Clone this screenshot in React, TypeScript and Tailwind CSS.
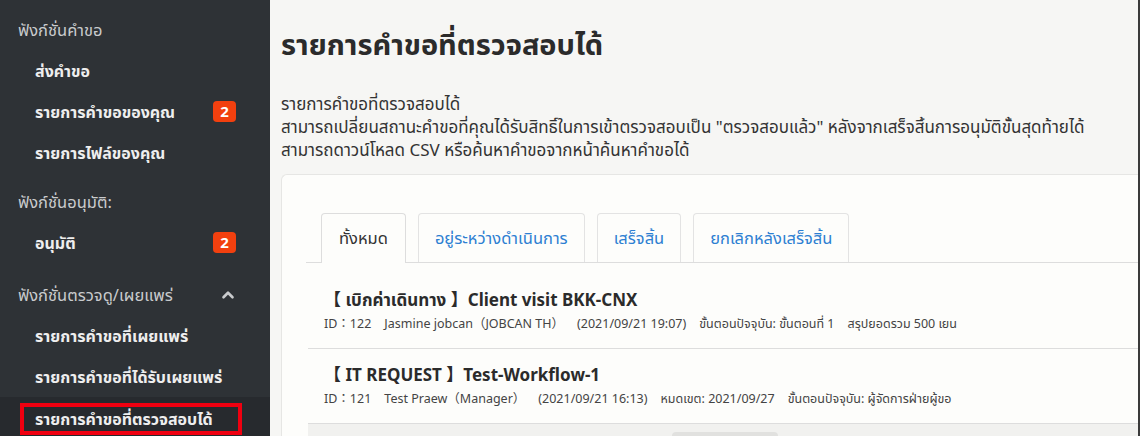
import React from 'react'
import { ChevronUp } from 'lucide-react'

const font = { fontFamily: '"Noto Sans", "Noto Sans Thai", "Noto Sans CJK JP", sans-serif' }

const Badge = ({ n }: { n: number }) => (
  <span className="ml-auto mr-[34px] flex h-[21px] w-[23px] items-center justify-center rounded-[4px] bg-[#f2400f] text-[15px] font-bold leading-none text-white">
    {n}
  </span>
)

const SideHeader = ({ children, chevron }: { children: React.ReactNode; chevron?: boolean }) => (
  <div className="flex h-[40px] items-center pl-[18px] text-[16.5px] text-[#c9cbcd]">
    {children}
    {chevron && <ChevronUp className="ml-auto mr-[33px] h-[18px] w-[18px] text-[#c9cbcd]" strokeWidth={3.5} />}
  </div>
)

const SideItem = ({ label, badge }: { label: string; badge?: number }) => (
  <div className="flex h-[41px] items-center pl-[35px] text-[16px] font-bold text-[#eeeeee]">
    {label}
    {badge !== undefined && <Badge n={badge} />}
  </div>
)

const Sidebar = () => (
  <aside className="w-[270px] shrink-0 bg-[#2e3236] pt-[10px]">
    <SideHeader>ฟังก์ชั่นคำขอ</SideHeader>
    <SideItem label="ส่งคำขอ" />
    <SideItem label="รายการคำขอของคุณ" badge={2} />
    <SideItem label="รายการไฟล์ของคุณ" />
    <div className="mt-[9px]">
      <SideHeader>ฟังก์ชั่นอนุมัติ:</SideHeader>
    </div>
    <SideItem label="อนุมัติ" badge={2} />
    <div className="mt-[12px]">
      <SideHeader chevron>ฟังก์ชั่นตรวจดู/เผยแพร่</SideHeader>
    </div>
    <SideItem label="รายการคำขอที่เผยแพร่" />
    <SideItem label="รายการคำขอที่ได้รับเผยแพร่" />
    <div className="flex h-[42px] items-start bg-[#272a2e] pt-[6px]">
      <div className="ml-[20px] flex h-[32px] w-[222px] items-center border-[4px] border-[#f00010] pl-[11px] text-[16px] font-bold text-[#eeeeee]">
        รายการคำขอที่ตรวจสอบได้
      </div>
    </div>
  </aside>
)

const tabs = ['ทั้งหมด', 'อยู่ระหว่างดำเนินการ', 'เสร็จสิ้น', 'ยกเลิกหลังเสร็จสิ้น']

const Tabs = () => (
  <div className="flex gap-[12px] border-b border-[#dddddd] pl-[15px]">
    {tabs.map((t, i) => (
      <div
        key={t}
        className={
          i === 0
            ? '-mb-px flex h-[50px] items-center rounded-t-[4px] border border-b-0 border-[#dddddd] bg-[#fdfdfb] px-[17px] text-[16.5px] text-[#333333]'
            : 'flex h-[49px] items-center rounded-t-[4px] border border-b-0 border-[#e3e3e3] px-[16px] text-[16.5px] text-[#2d7fd2]'
        }
      >
        {t}
      </div>
    ))}
  </div>
)

const Item = ({ title, meta, first }: { title: string; meta: string[]; first?: boolean }) => (
  <div className={`border-b border-[#dddddd] pl-[16px] ${first ? 'pt-[24px] pb-[13px]' : 'pt-[13px] pb-[13px]'}`}>
    <div className="text-[17px] font-bold leading-[26px] text-[#2b2b2b]">{title}</div>
    <div className="flex text-[12.5px] leading-[22px] text-[#444444]">
      {meta.map((m, i) => (
        <span key={i} className="mr-[13px] whitespace-pre">
          {m}
        </span>
      ))}
    </div>
  </div>
)

export default function App() {
  return (
    <div className="flex h-[436px] w-[1140px] overflow-hidden" style={font}>
      <Sidebar />
      <main className="flex min-w-0 flex-1 flex-col border-r-2 border-[#3a3a3a] bg-[#f6f6f4] pl-[11px]">
        <h1 className="pt-[24px] text-[29px] font-bold leading-[40px] text-[#2b2b2b]">รายการคำขอที่ตรวจสอบได้</h1>
        <div className="mt-[28px] text-[17px] leading-[23px] text-[#333333]">
          <p>รายการคำขอที่ตรวจสอบได้</p>
          <p>สามารถเปลี่ยนสถานะคำขอที่คุณได้รับสิทธิ์ในการเข้าตรวจสอบเป็น "ตรวจสอบแล้ว" หลังจากเสร็จสิ้นการอนุมัติขั้นสุดท้ายได้</p>
          <p>สามารถดาวน์โหลด CSV หรือค้นหาคำขอจากหน้าค้นหาคำขอได้</p>
        </div>
        <section className="mt-[13px] flex-1 rounded-tl-[6px] border-l border-t border-[#e6e6e4] bg-[#fdfdfb] pl-[24px] pt-[38px]">
          <Tabs />
          <div className="pl-[2px]">
            <Item
              first
              title="【 เบิกค่าเดินทาง 】Client visit BKK-CNX"
              meta={['ID：122', 'Jasmine jobcan（JOBCAN TH）', '(2021/09/21 19:07)', 'ขั้นตอนปัจจุบัน: ขั้นตอนที่ 1', 'สรุปยอดรวม 500 เยน']}
            />
            <Item
              title="【 IT REQUEST 】Test-Workflow-1"
              meta={['ID：121', 'Test Praew（Manager）', '(2021/09/21 16:13)', 'หมดเขต: 2021/09/27', 'ขั้นตอนปัจจุบัน: ผู้จัดการฝ่ายผู้ขอ']}
            />
            <div className="flex h-[20px] bg-[#f1f1ef] pl-[364px] pt-[8px]">
              <div className="h-[20px] w-[106px] rounded-t-[4px] bg-[#e1e1df]" />
            </div>
          </div>
        </section>
      </main>
    </div>
  )
}
